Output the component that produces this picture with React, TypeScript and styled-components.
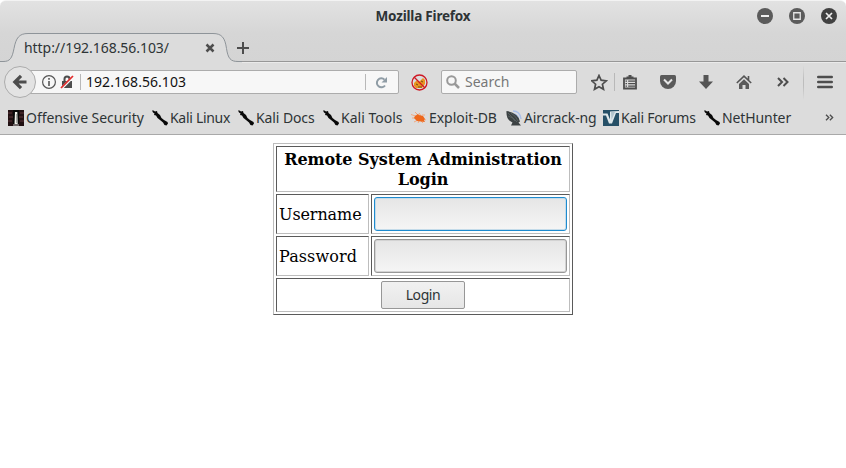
import React from 'react';
import styled, { createGlobalStyle } from 'styled-components';

const Global = createGlobalStyle`
  * { box-sizing: border-box; }
  html, body { margin: 0; padding: 0; background: #fff; }
  body { overflow: hidden; }
  svg { display: block; flex: none; }
`;

const Window = styled.div`
  width: 846px;
  height: 468px;
  display: flex;
  flex-direction: column;
  background: #fff;
  color: #2e3436;
  font: 14px/20px 'Noto Sans', 'Open Sans', sans-serif;
  white-space: nowrap;
`;

const Chrome = styled.header`
  height: 135px;
  background: linear-gradient(#e2e2e2 0, #d6d6d6 32px, #d4d4d4 61px, #dcdcdc 62px);
  border-top: 1px solid #f3f3f3;
  border-bottom: 1px solid #a9a9a9;
  border-radius: 6px 6px 0 0;
`;

const TitleBar = styled.div`
  height: 32px;
  display: grid;
  grid-template-columns: 1fr auto 1fr;
  align-items: center;
  padding: 0 9px;
`;

const Title = styled.div`
  grid-column: 2;
  font-weight: 700;
  font-size: 13.5px;
  letter-spacing: -0.2px;
  padding-bottom: 2px;
`;

const WindowButtons = styled.div`
  display: flex;
  gap: 16px;
  justify-content: flex-end;
  padding-bottom: 2px;
`;

const TabStrip = styled.div`
  height: 29px;
  display: flex;
  border-bottom: 1px solid #979797;
`;

const Tab = styled.div`
  width: 232px;
  height: 29px;
  display: grid;
  grid-template-columns: 232px;
  > * { grid-area: 1 / 1; }
`;

const TabContent = styled.div`
  display: flex;
  justify-content: space-between;
  align-items: center;
  padding: 0 17px 0 24px;
  z-index: 1;
`;

const Fit = styled.span<{ $ls?: number }>`
  letter-spacing: ${p => p.$ls ?? 0}px;
`;

const NewTab = styled.div`
  padding: 9px 0 0 4px;
`;

const NavBar = styled.div`
  height: 39px;
  display: flex;
  align-items: center;
  padding: 0 13px 0 4px;
  border-top: 1px solid #eaeaea;
`;

const BackButton = styled.div`
  width: 32px;
  height: 32px;
  border: 1px solid #acacac;
  border-radius: 50%;
  background: #e3e3e3;
  display: grid;
  place-items: center;
  z-index: 1;
`;

const Field = styled.div<{ $w: number }>`
  width: ${p => p.$w}px;
  height: 24px;
  display: flex;
  align-items: center;
  background: #f7f7f7;
  border: 1px solid #acacac;
  border-radius: 2px;
`;

const UrlBar = styled(Field)`
  margin-left: -8px;
  padding: 0 10px 0 13px;
  color: #111;
  svg + svg { margin-left: 4px; }
`;

const Divider = styled.i<{ $h: number; $m: string }>`
  width: 1px;
  height: ${p => p.$h}px;
  margin: ${p => p.$m};
  background: #b8b8b8;
`;

const FadedDivider = styled(Divider)`
  background: linear-gradient(transparent, #bdbdbd 40%, #bdbdbd 60%, transparent);
`;

const Spacer = styled.span`
  flex: 1;
`;

const SearchBox = styled(Field)`
  margin-left: 13px;
  padding-left: 4px;
  gap: 5px;
  color: #777;
`;

const Tool = styled.span<{ $gap: number }>`
  margin-left: ${p => p.$gap}px;
`;

const Bookmarks = styled.nav`
  height: 33px;
  display: grid;
  grid-template-columns: 144px 86px 85px 88px 95px 97px 101px 1fr auto;
  align-items: center;
  padding: 0 12px 0 8px;
`;

const Bookmark = styled.a`
  display: flex;
  align-items: center;
  gap: 2px;
  height: 20px;
`;

const Page = styled.main`
  flex: 1;
  display: flex;
  justify-content: center;
  align-items: flex-start;
  padding-top: 8px;
  font: 16px/20px 'DejaVu Serif', serif;
  color: #000;
`;

const LoginForm = styled.form`
  width: 300px;
  height: 172px;
  display: grid;
  grid-template-columns: 93px 199px;
  grid-template-rows: 46px 40px 40px 34px;
  gap: 2px;
  padding: 2px;
  border: 1px solid;
  border-color: #bdbdbd #5a5a5a #5a5a5a #bdbdbd;
`;

const Cell = styled.div<{ $wide?: boolean }>`
  grid-column: ${p => (p.$wide ? '1 / -1' : 'auto')};
  display: flex;
  align-items: center;
  justify-content: ${p => (p.$wide ? 'center' : 'flex-start')};
  padding: 0 2px;
  border: 1px solid;
  border-color: #5a5a5a #bdbdbd #bdbdbd #5a5a5a;
`;

const Heading = styled.strong`
  white-space: normal;
  text-align: center;
  letter-spacing: -0.07px;
  padding-top: 2px;
`;

const Label = styled.label<{ $ls: number }>`
  padding-top: 2px;
  letter-spacing: ${p => p.$ls}px;
`;

const Input = styled.input<{ $active?: boolean }>`
  width: 193px;
  height: 34px;
  outline: none;
  caret-color: transparent;
  border: 1px solid ${p => (p.$active ? '#1e8bcf' : '#979797')};
  border-radius: 3px;
  background: linear-gradient(#e5e5e5, #f5f5f5);
  box-shadow: inset 0 0 0 1px ${p => (p.$active ? '#c4dbe9' : '#d3d3d3')};
`;

const Submit = styled.button`
  width: 84px;
  height: 28px;
  padding: 0;
  border: 1px solid #979797;
  border-radius: 2px;
  background: linear-gradient(#f1f1f1, #e6e6e6);
  color: #2e3436;
  font: 14px/20px 'Noto Sans', sans-serif;
  letter-spacing: -0.4px;
`;

const ink = '#4d4d4d';

const Dragon = () => (
  <svg width="16" height="16" viewBox="0 0 16 16">
    <path d="M0 0.500h1.500L3 1.500l2-.5.500 2L8 5l1.500 3L12 10l3.500 2 .5 1.500-1.500 2-2-.5-1.500-2.500L8 10 5.500 8 4 5.500 2 5 2.500 3.500 1 2.500z" fill="#080808" />
  </svg>
);

const OffSec = () => (
  <svg width="16" height="16" viewBox="0 0 16 16">
    <path d="M0 0h16v16H0z" fill="#211012" />
    <path d="M0 3h4M1 7h4M0 11h4M12 3h4M11 7h4M12 11h4" stroke="#5d3538" />
    <path d="M5 0h6v14H5z" fill="#090909" />
    <path d="M7 2h2.300l.4 12H6.500z" fill="#f1f1ea" />
    <path d="M8.500 4v9" stroke="#777" strokeWidth=".6" />
    <path d="M5 15h6" stroke="#c5c5c5" />
  </svg>
);

const Spider = () => (
  <svg width="16" height="16" viewBox="0 0 16 16">
    <path d="M4 2l3 3M0 4.500l6 2M1 8h4M3 12l4-2M7 13l1-2M8 3l2 3M11 5h3M12 9l3 1M10 11l2 2" stroke="#f3a275" strokeWidth=".9" />
    <path d="M4 6l3-2 1 1 4 1 2 3-1 1 1 2-4-.5-4-.5-3-3z" fill="#ee681c" />
  </svg>
);

const Dish = () => (
  <svg width="16" height="16" viewBox="0 0 16 16">
    <path d="M7 1q7 0 8 8M8 4q4 1 4.500 5" fill="none" stroke="#a9bfe8" strokeWidth="1.500" />
    <path d="M.5 1Q0 8 4 11l2.500 1.500L5 15.500h10l-2.500-3 1.500-1Q12 3 .5 1z" fill="#3c4243" />
    <path d="M2 3l9 9M2 6q5 1 7 5M5 3q5 3 7 8" fill="none" stroke="#667070" strokeWidth=".6" />
  </svg>
);

const Forum = () => (
  <svg width="16" height="16" viewBox="0 0 16 16">
    <path d="M0 0h16v16H0z" fill="#265067" />
    <path d="M0 3.500h4.500L7 9.500V1.500L16 1v2h-3L9 13.500H6L3 5.500H0z" fill="#dfe8eb" />
    <path d="M8 2h4L8.500 10z" fill="#b1c4cd" />
  </svg>
);

const Chevrons = ({ w = 12, h = 10, s = 1.8 }) => (
  <svg width={w} height={h} viewBox="0 0 12 10">
    <path d="M1 1l4 4-4 4M6.500 1l4 4-4 4" fill="none" stroke={ink} strokeWidth={s} />
  </svg>
);

const bookmarks: [string, React.FC, number][] = [
  ['Offensive Security', OffSec, -0.05],
  ['Kali Linux', Dragon, -0.3],
  ['Kali Docs', Dragon, -0.1],
  ['Kali Tools', Dragon, 0],
  ['Exploit-DB', Spider, -0.05],
  ['Aircrack-ng', Dish, -0.15],
  ['Kali Forums', Forum, -0.25],
  ['NetHunter', Dragon, -0.1],
];

export default function App() {
  return (
    <Window>
      <Global />
      <Chrome>
        <TitleBar>
          <Title>Mozilla Firefox</Title>
          <WindowButtons>
            <svg width="16" height="16"><circle cx="8" cy="8" r="8" fill="#5b5b5b" /><path d="M4 8h8" stroke="#eee" strokeWidth="2" /></svg>
            <svg width="16" height="16"><circle cx="8" cy="8" r="8" fill="#5b5b5b" /><path d="M4.750 4.750h6.500v6.500h-6.500z" fill="none" stroke="#e4e4e4" strokeWidth="1.300" /></svg>
            <svg width="16" height="16"><circle cx="8" cy="8" r="8" fill="#414141" /><path d="M5 5l6 6M11 5l-6 6" stroke="#eee" strokeWidth="1.700" /></svg>
          </WindowButtons>
        </TitleBar>
        <TabStrip>
          <Tab>
            <svg width="242" height="29" viewBox="0 0 242 29" overflow="visible">
              <path d="M0 28.500h3c7 0 9-3 11-13C16 5 19 .5 28 .5h185c9 0 12 4.500 13.500 15 1.500 10 4 13 11.500 13h4V30H0z" fill="#dcdcdc" />
              <path d="M0 28.500h3c7 0 9-3 11-13C16 5 19 .5 28 .5h185c9 0 12 4.500 13.500 15 1.500 10 4 13 11.500 13h4" fill="none" stroke="#8e9499" />
            </svg>
            <TabContent>
              <Fit $ls={-0.05}>http://192.168.56.103/</Fit>
              <svg width="10" height="10"><path d="M1.500 1.500l7 7M8.500 1.500l-7 7" stroke={ink} strokeWidth="2.500" /></svg>
            </TabContent>
          </Tab>
          <NewTab>
            <svg width="14" height="12"><path d="M1 6h12M7 0v12" stroke={ink} strokeWidth="2" /></svg>
          </NewTab>
        </TabStrip>
        <NavBar>
          <BackButton>
            <svg width="16" height="16"><path d="M14.500 8H3M9 1.800L2.800 8 9 14.200" fill="none" stroke={ink} strokeWidth="3.200" /></svg>
          </BackButton>
          <UrlBar $w={371}>
            <svg width="14" height="14"><circle cx="7" cy="7" r="6.400" fill="none" stroke="#555" strokeWidth="1.200" /><path d="M7 6v5M7 3v1.700" stroke="#555" strokeWidth="1.600" /></svg>
            <svg width="14" height="14"><path d="M4.500 7V4a2.500 2.500 0 0 1 5 0v3" fill="none" stroke="#4d4d4d" strokeWidth="2" /><path d="M2 6h10v7H2z" fill="#4d4d4d" /><path d="M1.800 13.200L13.200 1.800" stroke="#f7f7f7" strokeWidth="2.500" /><path d="M1 13L13 1" stroke="#e22b2b" strokeWidth="1.700" /></svg>
            <Divider $h={16} $m="0 5px 0 6px" />
            <Fit $ls={0.05}>192.168.56.103</Fit>
            <Spacer />
            <Divider $h={16} $m="0 9px 0 0" />
            <svg width="13" height="13"><path d="M10 9.500A4.500 4.500 0 1 1 9.500 3.600" fill="none" stroke="#8f9ca5" strokeWidth="2" /><path d="M12 1v5.500H6.500z" fill="#8f9ca5" /></svg>
          </UrlBar>
          <Tool $gap={12}>
            <svg width="17" height="17"><path d="M3 9l3-3 2 2 4-4 2 2v4l-3 4H5l-2-2z" fill="#e99421" /><path d="M5 10l2 1M10 7l2 1M7 13h4" stroke="#774d13" /><circle cx="8.500" cy="8.500" r="7.500" fill="none" stroke="#ce1824" strokeWidth="1.300" /><path d="M3 3l11 11" stroke="#ce1824" strokeWidth="1.300" /></svg>
          </Tool>
          <SearchBox $w={136}>
            <svg width="14" height="14"><circle cx="5.500" cy="5.500" r="4.300" fill="none" stroke="#999" strokeWidth="2" /><path d="M8.500 8.500l4.500 4.500" stroke="#999" strokeWidth="2.500" /></svg>
            <Fit>Search</Fit>
          </SearchBox>
          <Tool $gap={14}>
            <svg width="17" height="17"><path d="M8 1.500l2.100 4.700 5.200.6-3.900 3.400 1.100 5.100L8 12.700l-4.500 2.600 1.100-5.100L.7 6.800l5.200-.6z" fill="none" stroke={ink} strokeWidth="1.700" /></svg>
          </Tool>
          <Divider $h={18} $m="0 7px 0 6px" />
          <svg width="16" height="15"><path d="M2 3.500h12v10H2z" fill="none" stroke={ink} strokeWidth="1.800" /><path d="M4.500 3V1.500h2V0h3v1.500h2V3z" fill={ink} /><path d="M3.500 6.200h1.500M6.200 6.200H13M3.500 8.700h1.500M6.200 8.700H13M3.500 11.200h1.500M6.200 11.200H13" stroke={ink} strokeWidth="1.300" /></svg>
          <Tool $gap={22}>
            <svg width="16" height="14"><path d="M1.500 0h13Q16 0 16 1.500V6A8 8 0 0 1 0 6V1.500Q0 0 1.500 0z" fill="#5a5a5a" /><path d="M4 4.500l4 4 4-4" fill="none" stroke="#e6e6e6" strokeWidth="2" /></svg>
          </Tool>
          <Tool $gap={23}>
            <svg width="14" height="14"><path d="M4.500 0h5v6.500H14L7 14 0 6.500h4.500z" fill="#555" /></svg>
          </Tool>
          <Tool $gap={23}>
            <svg width="16" height="15"><path d="M.8 8L8 1.200 15.200 8M12.500 1v4" fill="none" stroke="#555" strokeWidth="1.600" /><path d="M8 4.200l5 4.700V14H9.500v-4h-3v4H3V8.900z" fill="#5a5a5a" /></svg>
          </Tool>
          <Tool $gap={25}><Chevrons s={2} /></Tool>
          <Spacer />
          <FadedDivider $h={35} $m="0 13px 0 0" />
          <svg width="16" height="14"><path d="M1.200 2h13.600M1.200 7h13.600M1.200 12h13.600" stroke={ink} strokeWidth="2.400" strokeLinecap="round" /></svg>
        </NavBar>
        <Bookmarks>
          {bookmarks.map(([name, Icon, ls]) => (
            <Bookmark key={name}><Icon /><Fit $ls={ls}>{name}</Fit></Bookmark>
          ))}
          <Chevrons w={9} h={7} s={1.9} />
        </Bookmarks>
      </Chrome>
      <Page>
        <LoginForm>
          <Cell $wide><Heading>Remote System Administration Login</Heading></Cell>
          <Cell><Label $ls={-0.1}>Username</Label></Cell>
          <Cell><Input $active /></Cell>
          <Cell><Label $ls={0.1}>Password</Label></Cell>
          <Cell><Input type="password" /></Cell>
          <Cell $wide><Submit type="button">Login</Submit></Cell>
        </LoginForm>
      </Page>
    </Window>
  );
}
